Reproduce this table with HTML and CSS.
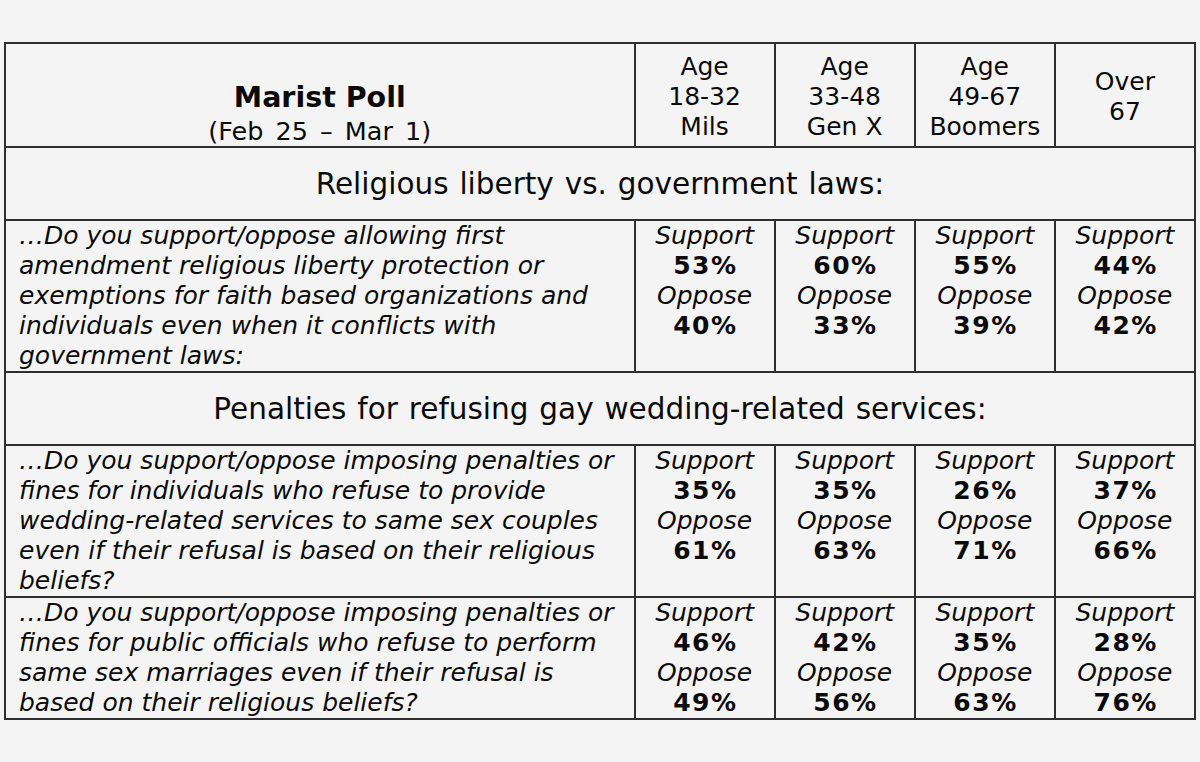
FILE: index.html
```html
<!DOCTYPE html>
<html lang="en">
<head>
<meta charset="utf-8">
<title>Marist Poll</title>
<link rel="stylesheet" href="styles.css">
</head>
<body>
<table class="poll">
  <colgroup>
    <col class="c-q">
    <col class="c-a">
    <col class="c-a">
    <col class="c-a">
    <col class="c-a">
  </colgroup>
  <tr class="head">
    <td class="title-cell">
      <div class="poll-name">Marist Poll</div>
      <div class="poll-date">(Feb 25 – Mar 1)</div>
    </td>
    <td class="age">Age<br>18-32<br>Mils</td>
    <td class="age">Age<br>33-48<br>Gen X</td>
    <td class="age">Age<br>49-67<br>Boomers</td>
    <td class="age">Over<br>67</td>
  </tr>
  <tr class="section">
    <td colspan="5">Religious liberty vs. government laws:</td>
  </tr>
  <tr>
    <td class="question">…Do you support/oppose allowing first<br>amendment religious liberty protection or<br>exemptions for faith based organizations and<br>individuals even when it conflicts with<br>government laws:</td>
    <td class="result"><i>Support</i><b>53%</b><i>Oppose</i><b>40%</b></td>
    <td class="result"><i>Support</i><b>60%</b><i>Oppose</i><b>33%</b></td>
    <td class="result"><i>Support</i><b>55%</b><i>Oppose</i><b>39%</b></td>
    <td class="result"><i>Support</i><b>44%</b><i>Oppose</i><b>42%</b></td>
  </tr>
  <tr class="section">
    <td colspan="5">Penalties for refusing gay wedding-related services:</td>
  </tr>
  <tr>
    <td class="question">…Do you support/oppose imposing penalties or<br>fines for individuals who refuse to provide<br>wedding-related services to same sex couples<br>even if their refusal is based on their religious<br>beliefs?</td>
    <td class="result"><i>Support</i><b>35%</b><i>Oppose</i><b>61%</b></td>
    <td class="result"><i>Support</i><b>35%</b><i>Oppose</i><b>63%</b></td>
    <td class="result"><i>Support</i><b>26%</b><i>Oppose</i><b>71%</b></td>
    <td class="result"><i>Support</i><b>37%</b><i>Oppose</i><b>66%</b></td>
  </tr>
  <tr>
    <td class="question">…Do you support/oppose imposing penalties or<br>fines for public officials who refuse to perform<br>same sex marriages even if their refusal is<br>based on their religious beliefs?</td>
    <td class="result"><i>Support</i><b>46%</b><i>Oppose</i><b>49%</b></td>
    <td class="result"><i>Support</i><b>42%</b><i>Oppose</i><b>56%</b></td>
    <td class="result"><i>Support</i><b>35%</b><i>Oppose</i><b>63%</b></td>
    <td class="result"><i>Support</i><b>28%</b><i>Oppose</i><b>76%</b></td>
  </tr>
</table>
</body>
</html>
```

FILE: styles.css
```css
html, body {
  background: #f4f4f4;
}
body {
  margin: 0;
  padding: 42px 0 0 4px;
  font-family: "DejaVu Sans", Verdana, sans-serif;
  color: #0a0a0a;
}
.poll {
  border-collapse: collapse;
  table-layout: fixed;
  width: 1192px;
}
.c-q { width: 629px; }
.c-a { width: 140px; }
.poll td {
  border: 2px solid #2e2e2e;
  padding: 0;
  font-size: 25px;
  line-height: 30px;
}
.head { height: 104px; }
.title-cell {
  vertical-align: bottom;
  text-align: center;
}
.poll-name {
  font-weight: bold;
  font-size: 28.5px;
  line-height: 37px;
}
.poll-date {
  font-size: 25.5px;
  line-height: 30px;
  word-spacing: 4px;
}
.age {
  text-align: center;
  vertical-align: middle;
  padding-top: 3px !important;
}
.section { height: 73px; }
.section td {
  text-align: center;
  vertical-align: middle;
  font-size: 29.5px;
  word-spacing: 1.5px;
}
.question {
  vertical-align: top;
  padding-left: 13px !important;
  font-style: italic;
  white-space: nowrap;
}
.result {
  vertical-align: top;
  text-align: center;
}
.result i, .result b {
  display: block;
}
.result i {
  font-style: italic;
}
.result b {
  font-weight: bold;
  letter-spacing: 1.5px;
  text-indent: 1.5px;
}
```
